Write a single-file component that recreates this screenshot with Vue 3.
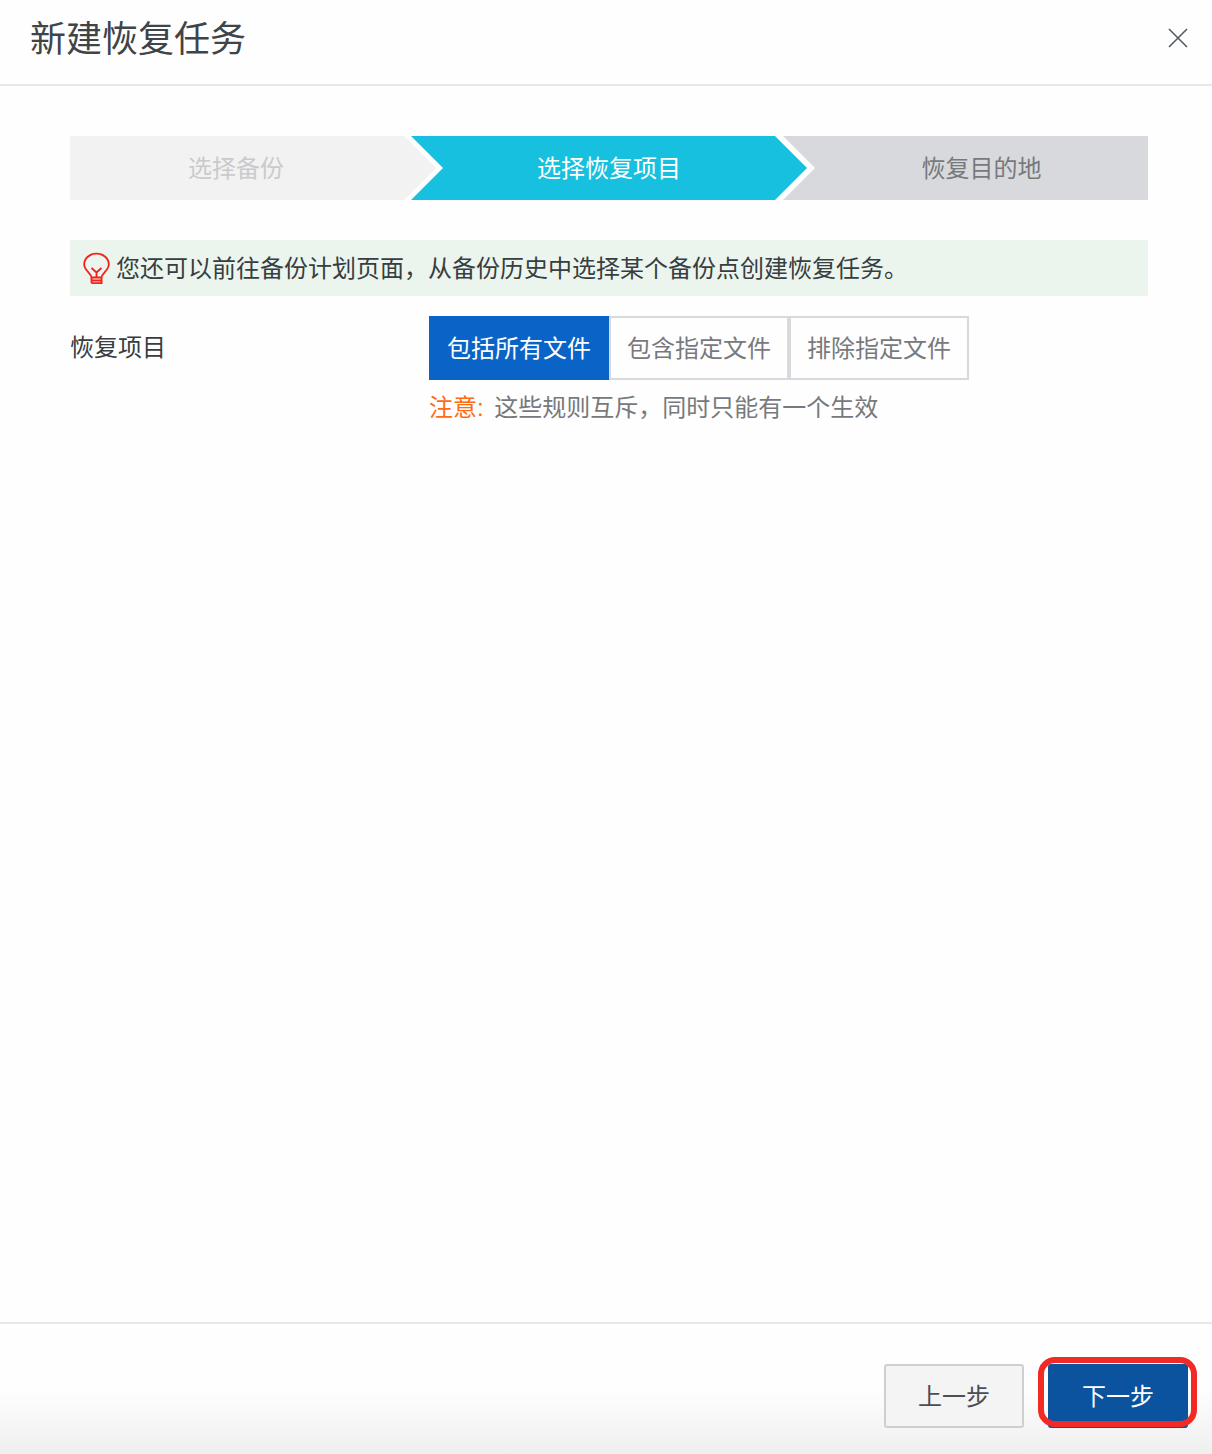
<template>
  <div class="dialog">
    <header class="head">
      <h1 class="title">新建恢复任务</h1>
      <button class="close" aria-label="关闭">
        <svg width="20" height="20" viewBox="0 0 20 20">
          <path d="M1 1 L19 19 M19 1 L1 19" stroke="#555a60" stroke-width="1.6" fill="none" />
        </svg>
      </button>
    </header>

    <main class="body">
      <div class="steps">
        <div class="step first">选择备份</div>
        <div class="step active">选择恢复项目</div>
        <div class="step last">恢复目的地</div>
      </div>

      <div class="tip">
        <svg class="bulb" width="28" height="34" viewBox="0 0 28 34">
          <g fill="none" stroke="#f5201a" stroke-width="1.8">
            <path d="M9.5 25.5 C9 21 2.2 18.5 2.2 12.6 C2.2 6.2 7.6 1.7 14.5 1.7 C21.4 1.7 26.8 6.2 26.8 12.6 C26.8 18.5 20 21 19.5 25.5 Z" />
            <path d="M9.5 16 L14.5 20.5 L19.5 16 M14.5 20.5 L14.5 25.5" />
            <path d="M9.5 28.5 L20.5 28.5 M9.5 31.2 L20.5 31.2 M9.5 25.5 L9.5 31.2 M19.5 25.5 L19.5 31.2" />
          </g>
        </svg>
        <span>您还可以前往备份计划页面，从备份历史中选择某个备份点创建恢复任务。</span>
      </div>

      <div class="form-row">
        <label class="form-label">恢复项目</label>
        <div class="form-ctrl">
          <div class="tabs">
            <div
              v-for="(t, i) in tabs"
              :key="t"
              class="tab"
              :class="{ on: i === current }"
              @click="current = i"
            >{{ t }}</div>
          </div>
          <p class="note"><em>注意:</em> 这些规则互斥，同时只能有一个生效</p>
        </div>
      </div>
    </main>

    <footer class="foot">
      <button class="btn">上一步</button>
      <div class="next-wrap">
        <button class="btn primary">下一步</button>
        <span class="mark"></span>
      </div>
    </footer>
  </div>
</template>

<script setup>
import { ref } from 'vue'

const tabs = ['包括所有文件', '包含指定文件', '排除指定文件']
const current = ref(0)
</script>

<style>
html, body {
  margin: 0;
  padding: 0;
  background: #fefefe;
}
</style>

<style scoped>
* {
  box-sizing: border-box;
}
.dialog {
  width: 1212px;
  height: 1454px;
  display: flex;
  flex-direction: column;
  background: #fefefe;
  color: #373d41;
  font-family: "Liberation Sans", "Noto Sans CJK SC", sans-serif;
  overflow: hidden;
}
.head {
  height: 86px;
  flex: none;
  display: flex;
  align-items: center;
  justify-content: space-between;
  padding: 0 24px 8px 30px;
  border-bottom: 2px solid #e8e8e8;
}
.title {
  margin: 4px 0 0;
  font-size: 36px;
  font-weight: 400;
  line-height: 48px;
  color: #3f4448;
}
.close {
  width: 20px;
  height: 20px;
  padding: 0;
  border: none;
  background: none;
  display: block;
}
.close svg {
  display: block;
}
.body {
  flex: 1;
  padding: 50px 64px 0 70px;
}
.steps {
  display: flex;
  height: 64px;
}
.step {
  display: flex;
  align-items: center;
  justify-content: center;
  padding-bottom: 4px;
  font-size: 24px;
}
.first {
  width: 366px;
  padding-right: 34px;
  background: #f2f2f2;
  color: #c9cacc;
  clip-path: polygon(0 0, 334px 0, 100% 50%, 334px 100%, 0 100%);
}
.active {
  width: 396px;
  margin-left: -25px;
  background: #17c0de;
  color: #fff;
  clip-path: polygon(0 0, 364px 0, 100% 50%, 364px 100%, 0 100%, 32px 50%);
}
.last {
  width: 365px;
  margin-left: -24px;
  padding-left: 32px;
  background: #d8d9dc;
  color: #77797c;
  clip-path: polygon(0 0, 100% 0, 100% 100%, 0 100%, 32px 50%);
}
.tip {
  margin-top: 40px;
  height: 56px;
  display: flex;
  align-items: center;
  padding-left: 12px;
  gap: 6px;
  background: #ebf5ed;
  font-size: 24px;
  color: #373d41;
}
.tip span {
  margin-bottom: 4px;
}
.bulb {
  display: block;
  flex: none;
  margin-top: 1px;
}
.form-row {
  display: flex;
  margin-top: 20px;
}
.form-label {
  width: 359px;
  flex: none;
  font-size: 24px;
  line-height: 64px;
  color: #373d41;
}
.tabs {
  display: flex;
}
.tab {
  width: 180px;
  height: 64px;
  display: flex;
  align-items: center;
  justify-content: center;
  padding-bottom: 4px;
  font-size: 24px;
  color: #77797c;
  border: 2px solid #d8d9dc;
}
.tab.on {
  background: #0a64c8;
  border-color: #0a64c8;
  color: #fff;
}
.note {
  margin: 9px 0 0;
  font-size: 24px;
  line-height: 38px;
  color: #77797c;
}
.note em {
  font-style: normal;
  color: #ff6a13;
  margin-right: 4px;
}
.foot {
  height: 132px;
  flex: none;
  display: flex;
  justify-content: flex-end;
  gap: 24px;
  padding: 40px 24px 0 0;
  border-top: 2px solid #e8e8e8;
  background: linear-gradient(to bottom, #fefefe 0, #fefefe 50%, #efefef 100%);
}
.btn {
  width: 140px;
  height: 64px;
  padding: 0 0 4px;
  font-family: inherit;
  font-size: 24px;
  color: #4a4f53;
  background: #f4f4f4;
  border: 2px solid #cfcfcf;
  border-radius: 3px;
}
.primary {
  display: block;
  background: #0b539f;
  border-color: #0b539f;
  color: #fff;
}
.next-wrap {
  position: relative;
  height: 64px;
}
.mark {
  position: absolute;
  left: -10px;
  top: -7px;
  width: 159px;
  height: 70px;
  border: 6px solid #f22a25;
  border-radius: 17px;
}
</style>
